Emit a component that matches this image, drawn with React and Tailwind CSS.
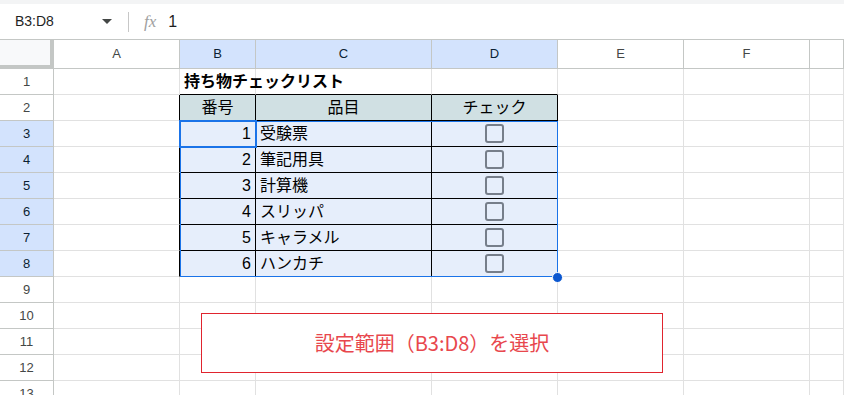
const COLS = ["A", "B", "C", "D", "E", "F", ""];
const ROWS = 13;

const items = [
  [1, "受験票"],
  [2, "筆記用具"],
  [3, "計算機"],
  [4, "スリッパ"],
  [5, "キャラメル"],
  [6, "ハンカチ"],
];

function Checkbox() {
  return <div className="w-[19px] h-[19px] rounded-[3px] border-2 border-[#767e8a]" />;
}

function cellClass(r, c) {
  // r: 1-based row, c: 0=A .. 6=G
  const inTable = r >= 2 && r <= 8 && c >= 1 && c <= 3;
  let right = "border-r-[#e1e1e1]";
  let bottom = "border-b-[#e1e1e1]";
  if (inTable) {
    right = "border-r-black";
    bottom = "border-b-black";
  }
  if (c === 0 && r >= 2 && r <= 8) right = "border-r-black";
  if (r === 1 && c >= 1 && c <= 3) bottom = "border-b-black";
  let bg = "bg-white";
  if (r === 2 && inTable) bg = "bg-[#d0e0e3]";
  if (r >= 3 && inTable) bg = "bg-[#e6eefb]";
  return `border-r border-b ${right} ${bottom} ${bg}`;
}

function cellContent(r, c) {
  if (r === 1 && c === 1)
    return (
      <span className="relative z-10 pl-[4px] font-bold text-[16px] whitespace-nowrap text-black">
        持ち物チェックリスト
      </span>
    );
  if (r === 2 && c >= 1 && c <= 3)
    return (
      <span className="w-full text-center text-[16px] text-black">
        {["番号", "品目", "チェック"][c - 1]}
      </span>
    );
  if (r >= 3 && r <= 8) {
    const [n, name] = items[r - 3];
    if (c === 1) return <span className="w-full text-right pr-[4px] text-[16px] text-black">{n}</span>;
    if (c === 2) return <span className="pl-[4px] text-[16px] text-black whitespace-nowrap">{name}</span>;
    if (c === 3)
      return (
        <div className="w-full flex justify-center">
          <Checkbox />
        </div>
      );
  }
  return null;
}

export default function App() {
  const rows = Array.from({ length: ROWS }, (_, i) => i + 1);
  return (
    <div
      className="w-[844px] h-[395px] overflow-hidden bg-white"
      style={{ fontFamily: '"Liberation Sans", Arial, "Noto Sans CJK JP", sans-serif' }}
    >
      {/* formula bar */}
      <div className="h-[40px] border-t-[4px] border-t-[#f3f4f5] border-b border-b-[#c4c7c5] flex items-center">
        <div className="w-[128px] flex items-center justify-between pl-[15px] pr-[16px]">
          <span className="text-[14px] text-[#1f1f1f]">B3:D8</span>
          <svg width="10" height="6" viewBox="0 0 10 6">
            <path d="M0 0 L10 0 L5 5 Z" fill="#444746" />
          </svg>
        </div>
        <div className="w-px h-[20px] bg-[#c7c7c7]" />
        <span className="ml-[15px] italic text-[#a0a0a0] text-[17px]" style={{ fontFamily: '"Liberation Serif", serif' }}>
          fx
        </span>
        <span className="ml-[12px] text-[16px] text-[#1f1f1f]">1</span>
      </div>

      <div className="relative">
        <div className="grid grid-cols-[54px_126px_76px_176px_126px_126px_126px_34px] grid-rows-[29px_repeat(13,26px)]">
          {/* header row */}
          <div className="bg-[#f8f9fa] border-r-[4px] border-b-[4px] border-[#c4c7c5]" />
          {COLS.map((l, i) => (
            <div
              key={l + i}
              className={`border-r border-b border-r-[#c4c7c5] border-b-[#c4c7c5] flex items-center justify-center text-[13px] ${
                i >= 1 && i <= 3 ? "bg-[#d3e3fd] text-[#0b1f33]" : "bg-white text-[#444746]"
              }`}
            >
              {l}
            </div>
          ))}
          {rows.map((r) => (
            <div key={r} className="contents">
              <div
                className={`border-r border-b border-r-[#c4c7c5] border-b-[#c4c7c5] flex items-center justify-center text-[13px] ${
                  r >= 3 && r <= 8 ? "bg-[#d3e3fd] text-[#0b1f33]" : "bg-white text-[#444746]"
                }`}
              >
                {r}
              </div>
              {COLS.map((_, c) => (
                <div key={c} className={`${cellClass(r, c)} flex items-center overflow-visible`}>
                  {cellContent(r, c)}
                </div>
              ))}
            </div>
          ))}
        </div>

        {/* selection range B3:D8 */}
        <div className="absolute left-[180px] top-[81px] w-[378px] h-[156px] border border-[#1a73e8] pointer-events-none" />
        {/* active cell B3 */}
        <div className="absolute left-[179px] top-[80px] w-[78px] h-[28px] border-2 border-[#1a73e8] pointer-events-none" />
        {/* fill handle */}
        <div className="absolute left-[552px] top-[232px] w-[11px] h-[11px] rounded-full bg-[#0b57d0] border border-white" />

        {/* annotation */}
        <div className="absolute left-[201px] top-[273px] w-[462px] h-[60px] border border-[#e0242e] bg-white flex items-center justify-center">
          <span className="text-[20px] text-[#e8474d]" style={{ fontFamily: '"Noto Sans CJK JP", sans-serif' }}>
            設定範囲（B3:D8）を選択
          </span>
        </div>
      </div>
    </div>
  );
}
